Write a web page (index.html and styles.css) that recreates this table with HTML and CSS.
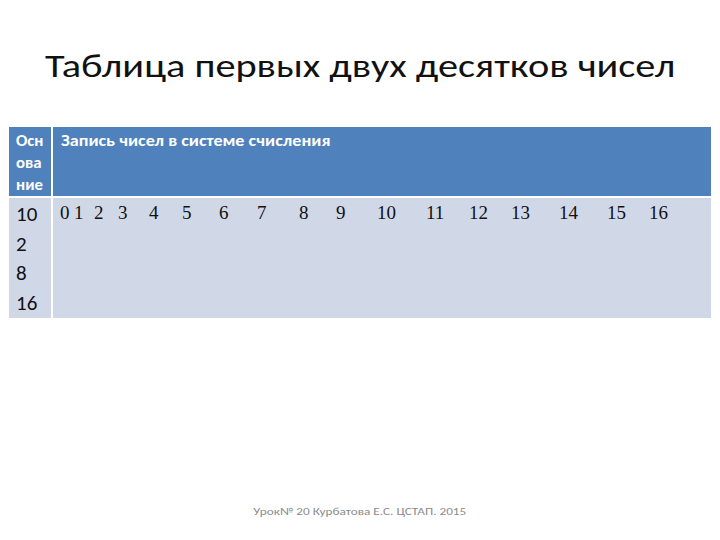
FILE: index.html
```html
<!DOCTYPE html>
<html lang="ru">
<head>
<meta charset="utf-8">
<title>Таблица</title>
<link rel="stylesheet" href="styles.css">
</head>
<body>
<div class="slide">
  <div class="title-wrap"><h1 class="title">Таблица первых двух десятков чисел</h1></div>
  <table class="grid">
    <tr class="head">
      <td class="c1"><span class="stretch">Осн<br>ова<br>ние</span></td>
      <td class="c2"><span class="stretch">Запись чисел в системе счисления</span></td>
    </tr>
    <tr class="body">
      <td class="c1 bases">10<br>2<br>8<br>16</td>
      <td class="c2">
        <div class="nums">
          <span>0</span><span>1</span><span>2</span><span>3</span><span>4</span><span>5</span><span>6</span><span>7</span><span>8</span><span>9</span><span>10</span><span>11</span><span>12</span><span>13</span><span>14</span><span>15</span><span>16</span>
        </div>
      </td>
    </tr>
  </table>
  <div class="footer"><span class="foot-text">Урок№ 20 Курбатова Е.С. ЦСТАП. 2015</span></div>
</div>
</body>
</html>
```
FILE: styles.css
```css
html, body {
  margin: 0;
  padding: 0;
  background: #ffffff;
}
.slide {
  width: 720px;
  height: 540px;
  position: relative;
  font-family: Carlito, Lato, "Liberation Sans", sans-serif;
}
.title-wrap {
  height: 127px;
  padding-top: 45px;
  box-sizing: border-box;
  text-align: center;
}
.title {
  display: inline-block;
  margin: 0;
  font-weight: normal;
  font-size: 32px;
  line-height: 44px;
  color: #111111;
  transform: scaleX(1.26);
  transform-origin: center;
}
.grid {
  margin-left: 9px;
  width: 702px;
  border-collapse: collapse;
  border-spacing: 0;
}
.grid td {
  vertical-align: top;
  padding: 0;
}
.stretch {
  display: inline-block;
  transform: scaleX(1.17);
  transform-origin: left top;
}
.head td {
  background: #4f81bd;
  color: #ffffff;
  font-weight: bold;
  font-size: 15.5px;
  line-height: 22px;
  height: 70px;
  box-sizing: border-box;
  padding-top: 3px;
  border-bottom: 2px solid #ffffff;
}
.c1 {
  width: 43px;
  box-sizing: border-box;
  padding-left: 7px !important;
  border-right: 2px solid #ffffff;
}
.head .c1 .stretch {
  transform: scaleX(1.08);
}
.head .c2 {
  padding-left: 8px;
}
.body td {
  background: #d0d8e8;
  height: 121px;
  box-sizing: border-box;
  color: #111111;
}
.bases {
  font-size: 21px;
  line-height: 29.5px;
  padding-top: 2px !important;
}
.nums {
  display: grid;
  grid-template-columns: 14px 20px 24px 31px 33px 37px 38px 42px 37px 41px 49px 43px 42px 48px 48px 42px auto;
  padding-left: 7px;
  padding-top: 3px;
  font-family: "Liberation Serif", serif;
  font-size: 19px;
  line-height: 24px;
}
.footer {
  position: absolute;
  left: 0;
  right: 0;
  top: 505px;
  text-align: center;
  font-size: 11px;
  color: #8c8c8c;
}
.foot-text {
  display: inline-block;
  transform: scaleX(1.2);
  transform-origin: center;
}
```
